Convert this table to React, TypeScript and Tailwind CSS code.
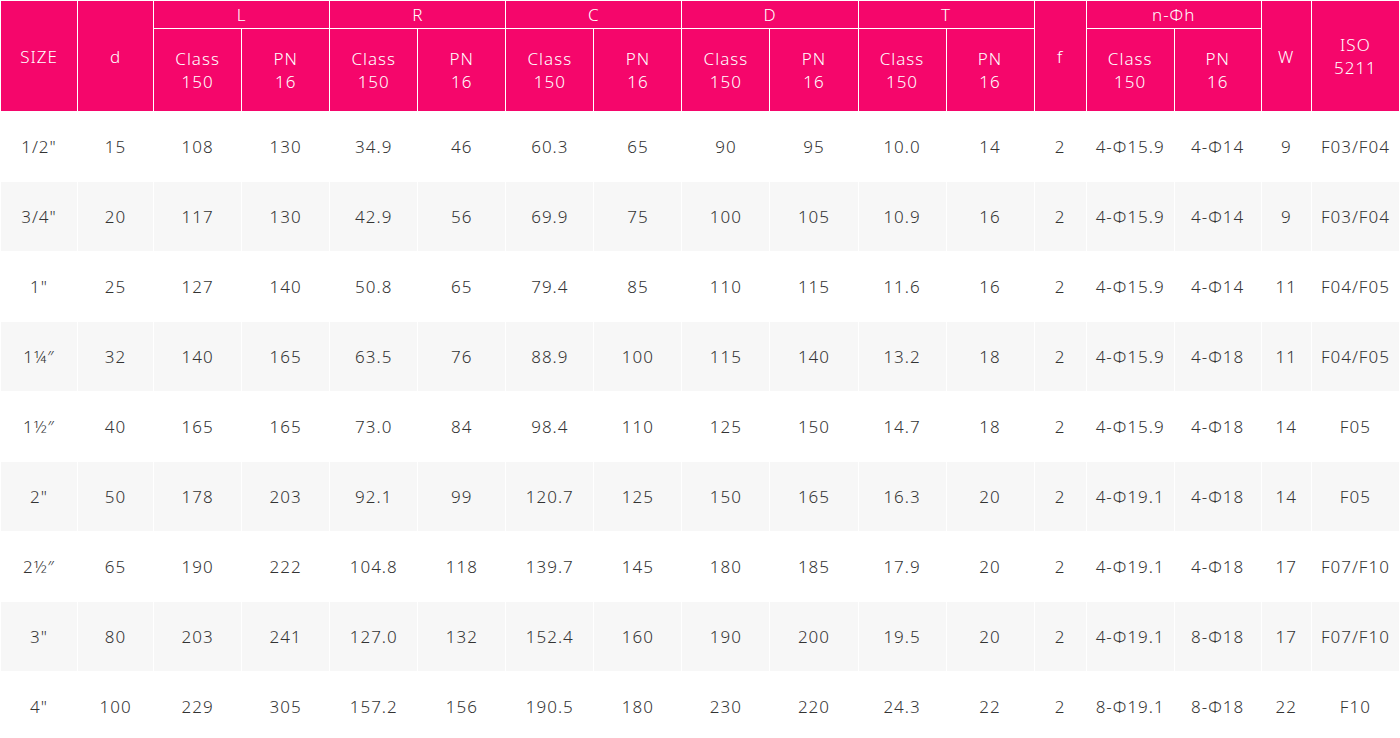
const GROUPS = ["L", "R", "C", "D", "T"];

const ROWS: string[][] = [
  ["1/2\"", "15", "108", "130", "34.9", "46", "60.3", "65", "90", "95", "10.0", "14", "2", "4-Φ15.9", "4-Φ14", "9", "F03/F04"],
  ["3/4\"", "20", "117", "130", "42.9", "56", "69.9", "75", "100", "105", "10.9", "16", "2", "4-Φ15.9", "4-Φ14", "9", "F03/F04"],
  ["1\"", "25", "127", "140", "50.8", "65", "79.4", "85", "110", "115", "11.6", "16", "2", "4-Φ15.9", "4-Φ14", "11", "F04/F05"],
  ["1¼″", "32", "140", "165", "63.5", "76", "88.9", "100", "115", "140", "13.2", "18", "2", "4-Φ15.9", "4-Φ18", "11", "F04/F05"],
  ["1½″", "40", "165", "165", "73.0", "84", "98.4", "110", "125", "150", "14.7", "18", "2", "4-Φ15.9", "4-Φ18", "14", "F05"],
  ["2\"", "50", "178", "203", "92.1", "99", "120.7", "125", "150", "165", "16.3", "20", "2", "4-Φ19.1", "4-Φ18", "14", "F05"],
  ["2½″", "65", "190", "222", "104.8", "118", "139.7", "145", "180", "185", "17.9", "20", "2", "4-Φ19.1", "4-Φ18", "17", "F07/F10"],
  ["3\"", "80", "203", "241", "127.0", "132", "152.4", "160", "190", "200", "19.5", "20", "2", "4-Φ19.1", "8-Φ18", "17", "F07/F10"],
  ["4\"", "100", "229", "305", "157.2", "156", "190.5", "180", "230", "220", "24.3", "22", "2", "8-Φ19.1", "8-Φ18", "22", "F10"],
];

const COLS = [76, 75, 87, 87, 87, 87, 87, 87, 87, 87, 87, 87, 51, 87, 86, 49, 87];

function SubHead() {
  return (
    <>
      <th className="bg-[#f5066b] font-light">
        Class
        <br />
        150
      </th>
      <th className="bg-[#f5066b] font-light">
        PN
        <br />
        16
      </th>
    </>
  );
}

export default function App() {
  return (
    <div className="w-[1400px] h-[738px] overflow-hidden bg-white">
      <table
        className="w-[1400px] table-fixed border-separate border-spacing-[1px] text-center text-[17px] font-light tracking-[1px]"
        style={{ fontFamily: '"Noto Sans", "Open Sans", sans-serif' }}
      >
        <colgroup>
          {COLS.map((w, i) => (
            <col key={i} style={{ width: w }} />
          ))}
        </colgroup>
        <thead className="text-white leading-[23px]">
          <tr className="h-[27px]">
            <th rowSpan={2} className="bg-[#f5066b] font-light">SIZE</th>
            <th rowSpan={2} className="bg-[#f5066b] font-light">d</th>
            {GROUPS.map((g) => (
              <th key={g} colSpan={2} className="bg-[#f5066b] font-light">
                {g}
              </th>
            ))}
            <th rowSpan={2} className="bg-[#f5066b] font-light">f</th>
            <th colSpan={2} className="bg-[#f5066b] font-light">n-Φh</th>
            <th rowSpan={2} className="bg-[#f5066b] font-light">W</th>
            <th rowSpan={2} className="bg-[#f5066b] font-light">
              ISO
              <br />
              5211
            </th>
          </tr>
          <tr className="h-[82px]">
            {GROUPS.map((g) => (
              <SubHead key={g} />
            ))}
            <SubHead />
          </tr>
        </thead>
        <tbody className="text-[#333333]">
          {ROWS.map((row, r) => (
            <tr key={r} className="h-[69px]">
              {row.map((cell, c) => (
                <td
                  key={c}
                  className={`whitespace-nowrap ${r % 2 === 1 ? "bg-[#f7f7f7]" : "bg-white"}`}
                >
                  {cell}
                </td>
              ))}
            </tr>
          ))}
        </tbody>
      </table>
    </div>
  );
}
